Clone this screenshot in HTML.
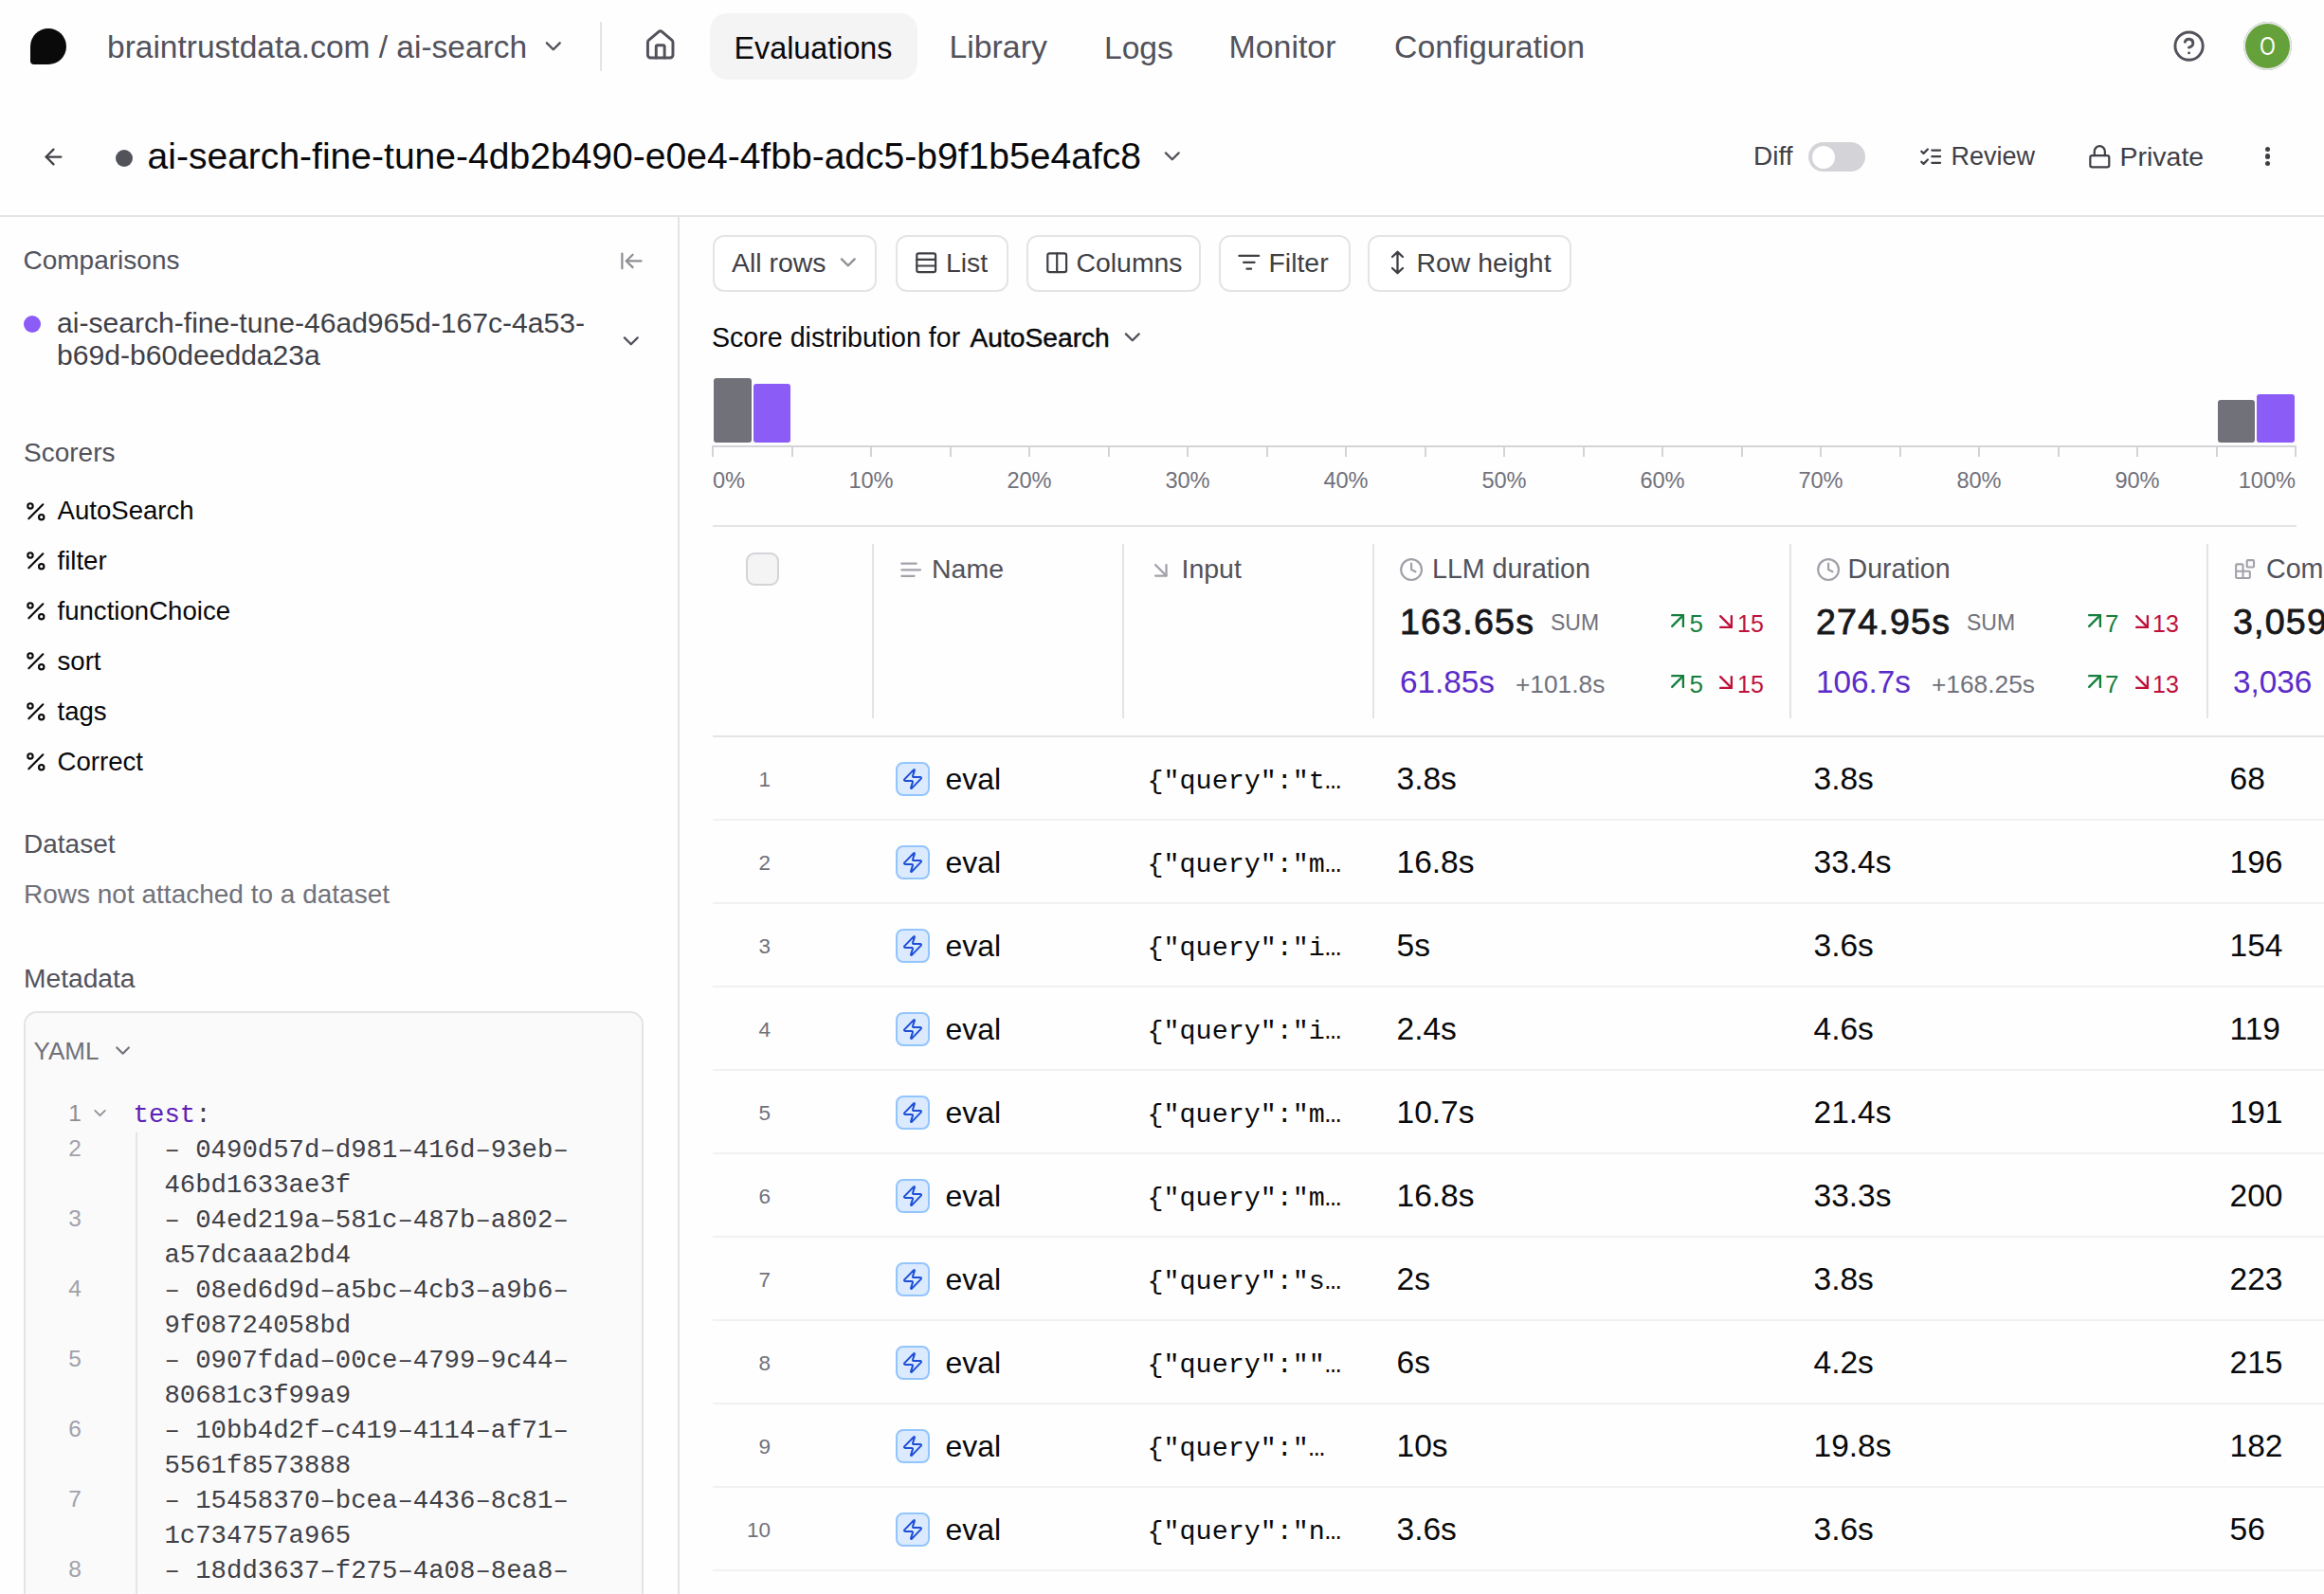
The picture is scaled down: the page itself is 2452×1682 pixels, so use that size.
<!DOCTYPE html>
<html><head><meta charset="utf-8"><title>ai-search eval</title><style>
html,body{margin:0;padding:0;}
body{width:2452px;height:1682px;position:relative;overflow:hidden;background:#fefefe;font-family:"Liberation Sans", sans-serif;}
.t{position:absolute;white-space:pre;}
.s{font-family:"Liberation Sans", sans-serif;}
.m{font-family:"Liberation Mono", monospace;}
.r{position:absolute;}
svg.r{overflow:visible;}
</style></head>
<body>
<div class="r" style="left:32px;top:30px;width:38px;height:38px;background:#0a0a0a;border-radius:19px 19px 19px 4px;"></div>
<div class="t s" style="left:113.0px;top:32.6px;font-size:33.5px;line-height:33.5px;color:#52525b;">braintrustdata.com / ai-search</div>
<svg class="r" style="left:570.30px;top:34.80px" width="27.60" height="27.60" viewBox="0 0 24 24" fill="none" stroke="#52525b" stroke-width="2.1" stroke-linecap="round" stroke-linejoin="round"><path d="m6 9 6 6 6-6"/></svg>
<div class="r" style="left:633px;top:23px;width:2px;height:52px;background:#e4e4e7;"></div>
<svg class="r" style="left:678.50px;top:29.80px" width="35.40" height="35.40" viewBox="0 0 24 24" fill="none" stroke="#52525b" stroke-width="2" stroke-linecap="round" stroke-linejoin="round"><path d="M15 21v-8a1 1 0 0 0-1-1h-4a1 1 0 0 0-1 1v8"/><path d="M3 10a2 2 0 0 1 .709-1.528l7-5.999a2 2 0 0 1 2.582 0l7 5.999A2 2 0 0 1 21 10v9a2 2 0 0 1-2 2H5a2 2 0 0 1-2-2z"/></svg>
<div class="r" style="left:749px;top:14px;width:219px;height:70px;background:#f4f4f5;border-radius:18px;"></div>
<div class="t s" style="left:774.5px;top:34.6px;font-size:32.3px;line-height:32.3px;color:#09090b;">Evaluations</div>
<div class="t s" style="left:1001.5px;top:33.4px;font-size:33.8px;line-height:33.8px;color:#52525b;">Library</div>
<div class="t s" style="left:1165.0px;top:33.5px;font-size:33.6px;line-height:33.6px;color:#52525b;">Logs</div>
<div class="t s" style="left:1296.5px;top:33.3px;font-size:33.9px;line-height:33.9px;color:#52525b;">Monitor</div>
<div class="t s" style="left:1471.0px;top:33.4px;font-size:33.8px;line-height:33.8px;color:#52525b;">Configuration</div>
<svg class="r" style="left:2292.00px;top:30.80px" width="35.14" height="35.14" viewBox="0 0 24 24" fill="none" stroke="#52525b" stroke-width="2" stroke-linecap="round" stroke-linejoin="round"><circle cx="12" cy="12" r="10"/><path d="M9.09 9a3 3 0 0 1 5.83 1c0 2-3 3-3 3"/><path d="M12 17h.01"/></svg>
<div class="r" style="left:2367px;top:23px;width:51px;height:51px;background:#65a13a;border-radius:50%;box-shadow:0 0 0 2px #e9e7ee inset;"></div>
<div class="t s" style="left:2376.0px;top:35.8px;font-size:27px;line-height:27px;color:#ffffff;width:33px;text-align:center;transform:scaleX(0.78);">O</div>
<svg class="r" style="left:42.50px;top:151.90px" width="27.00" height="27.00" viewBox="0 0 24 24" fill="none" stroke="#3f3f46" stroke-width="2" stroke-linecap="round" stroke-linejoin="round"><path d="m12 19-7-7 7-7"/><path d="M19 12H5"/></svg>
<div class="r" style="left:122px;top:158px;width:18px;height:18px;background:#52525b;border-radius:50%;"></div>
<div class="t s" style="left:155.5px;top:144.9px;font-size:39.05px;line-height:39.05px;color:#09090b;">ai-search-fine-tune-4db2b490-e0e4-4fbb-adc5-b9f1b5e4afc8</div>
<svg class="r" style="left:1223.00px;top:150.50px" width="27.60" height="27.60" viewBox="0 0 24 24" fill="none" stroke="#52525b" stroke-width="2" stroke-linecap="round" stroke-linejoin="round"><path d="m6 9 6 6 6-6"/></svg>
<div class="t s" style="left:1850.0px;top:151.3px;font-size:28px;line-height:28px;color:#3f3f46;">Diff</div>
<div class="r" style="left:1908px;top:150px;width:60px;height:31px;background:#d4d4d8;border-radius:16px;"></div>
<div class="r" style="left:1911.5px;top:153.5px;width:24.0px;height:24.0px;background:#ffffff;border-radius:50%;"></div>
<svg class="r" style="left:2023.80px;top:151.50px" width="26.40" height="26.40" viewBox="0 0 24 24" fill="none" stroke="#3f3f46" stroke-width="2" stroke-linecap="round" stroke-linejoin="round"><path d="m3 17 2 2 4-4"/><path d="m3 7 2 2 4-4"/><path d="M13 6h8"/><path d="M13 12h8"/><path d="M13 18h8"/></svg>
<div class="t s" style="left:2058.5px;top:152.1px;font-size:27px;line-height:27px;color:#3f3f46;">Review</div>
<svg class="r" style="left:2201.80px;top:151.70px" width="26.64" height="26.64" viewBox="0 0 24 24" fill="none" stroke="#3f3f46" stroke-width="2" stroke-linecap="round" stroke-linejoin="round"><rect width="18" height="11" x="3" y="11" rx="2" ry="2"/><path d="M7 11V7a5 5 0 0 1 10 0v4"/></svg>
<div class="t s" style="left:2236.5px;top:150.9px;font-size:28.5px;line-height:28.5px;color:#3f3f46;">Private</div>
<div class="r" style="left:2389.5px;top:154.8px;width:5.400000000000091px;height:5.399999999999977px;background:#3f3f46;border-radius:50%;"></div>
<div class="r" style="left:2389.5px;top:162.3px;width:5.400000000000091px;height:5.399999999999977px;background:#3f3f46;border-radius:50%;"></div>
<div class="r" style="left:2389.5px;top:169.8px;width:5.400000000000091px;height:5.399999999999977px;background:#3f3f46;border-radius:50%;"></div>
<div class="r" style="left:0px;top:227px;width:2452px;height:2px;background:#e4e4e7;"></div>
<div class="r" style="left:715px;top:229px;width:2px;height:1453px;background:#e4e4e7;"></div>
<div class="t s" style="left:24.5px;top:261.3px;font-size:28px;line-height:28px;color:#52525b;">Comparisons</div>
<svg class="r" style="left:652.80px;top:261.50px" width="26.88" height="26.88" viewBox="0 0 24 24" fill="none" stroke="#8e8e96" stroke-width="2" stroke-linecap="round" stroke-linejoin="round"><path d="M3 19V5"/><path d="m13 6-6 6 6 6"/><path d="M7 12h14"/></svg>
<div class="r" style="left:25px;top:333px;width:18px;height:18px;background:#8b5cf6;border-radius:50%;"></div>
<div class="t s" style="left:60.0px;top:325.5px;font-size:30.1px;line-height:30.1px;color:#3f3f46;">ai-search-fine-tune-46ad965d-167c-4a53-</div>
<div class="t s" style="left:60.0px;top:360.0px;font-size:30.1px;line-height:30.1px;color:#3f3f46;">b69d-b60deedda23a</div>
<svg class="r" style="left:652.30px;top:345.50px" width="27.60" height="27.60" viewBox="0 0 24 24" fill="none" stroke="#52525b" stroke-width="2" stroke-linecap="round" stroke-linejoin="round"><path d="m6 9 6 6 6-6"/></svg>
<div class="t s" style="left:25.0px;top:463.8px;font-size:28px;line-height:28px;color:#52525b;">Scorers</div>
<svg class="r" style="left:25.20px;top:526.60px" width="25.68" height="25.68" viewBox="0 0 24 24" fill="none" stroke="#09090b" stroke-width="2" stroke-linecap="round" stroke-linejoin="round"><line x1="19" x2="5" y1="5" y2="19"/><circle cx="6.5" cy="6.5" r="2.5"/><circle cx="17.5" cy="17.5" r="2.5"/></svg>
<div class="t s" style="left:60.5px;top:525.4px;font-size:27.6px;line-height:27.6px;color:#09090b;">AutoSearch</div>
<svg class="r" style="left:25.20px;top:579.45px" width="25.68" height="25.68" viewBox="0 0 24 24" fill="none" stroke="#09090b" stroke-width="2" stroke-linecap="round" stroke-linejoin="round"><line x1="19" x2="5" y1="5" y2="19"/><circle cx="6.5" cy="6.5" r="2.5"/><circle cx="17.5" cy="17.5" r="2.5"/></svg>
<div class="t s" style="left:60.5px;top:578.3px;font-size:27.6px;line-height:27.6px;color:#09090b;">filter</div>
<svg class="r" style="left:25.20px;top:632.30px" width="25.68" height="25.68" viewBox="0 0 24 24" fill="none" stroke="#09090b" stroke-width="2" stroke-linecap="round" stroke-linejoin="round"><line x1="19" x2="5" y1="5" y2="19"/><circle cx="6.5" cy="6.5" r="2.5"/><circle cx="17.5" cy="17.5" r="2.5"/></svg>
<div class="t s" style="left:60.5px;top:631.1px;font-size:27.6px;line-height:27.6px;color:#09090b;">functionChoice</div>
<svg class="r" style="left:25.20px;top:685.15px" width="25.68" height="25.68" viewBox="0 0 24 24" fill="none" stroke="#09090b" stroke-width="2" stroke-linecap="round" stroke-linejoin="round"><line x1="19" x2="5" y1="5" y2="19"/><circle cx="6.5" cy="6.5" r="2.5"/><circle cx="17.5" cy="17.5" r="2.5"/></svg>
<div class="t s" style="left:60.5px;top:684.0px;font-size:27.6px;line-height:27.6px;color:#09090b;">sort</div>
<svg class="r" style="left:25.20px;top:738.00px" width="25.68" height="25.68" viewBox="0 0 24 24" fill="none" stroke="#09090b" stroke-width="2" stroke-linecap="round" stroke-linejoin="round"><line x1="19" x2="5" y1="5" y2="19"/><circle cx="6.5" cy="6.5" r="2.5"/><circle cx="17.5" cy="17.5" r="2.5"/></svg>
<div class="t s" style="left:60.5px;top:736.8px;font-size:27.6px;line-height:27.6px;color:#09090b;">tags</div>
<svg class="r" style="left:25.20px;top:790.85px" width="25.68" height="25.68" viewBox="0 0 24 24" fill="none" stroke="#09090b" stroke-width="2" stroke-linecap="round" stroke-linejoin="round"><line x1="19" x2="5" y1="5" y2="19"/><circle cx="6.5" cy="6.5" r="2.5"/><circle cx="17.5" cy="17.5" r="2.5"/></svg>
<div class="t s" style="left:60.5px;top:789.7px;font-size:27.6px;line-height:27.6px;color:#09090b;">Correct</div>
<div class="t s" style="left:25.0px;top:877.3px;font-size:28px;line-height:28px;color:#52525b;">Dataset</div>
<div class="t s" style="left:25.0px;top:930.3px;font-size:28px;line-height:28px;color:#71717a;">Rows not attached to a dataset</div>
<div class="t s" style="left:25.0px;top:1018.1px;font-size:28.2px;line-height:28.2px;color:#52525b;">Metadata</div>
<div class="r" style="left:25px;top:1067px;width:654px;height:700px;background:#fafafa;border:2px solid #e4e4e7;border-radius:14px;box-sizing:border-box;"></div>
<div class="t s" style="left:35.5px;top:1096.0px;font-size:26px;line-height:26px;color:#71717a;">YAML</div>
<svg class="r" style="left:116.50px;top:1096.00px" width="25.20" height="25.20" viewBox="0 0 24 24" fill="none" stroke="#71717a" stroke-width="2" stroke-linecap="round" stroke-linejoin="round"><path d="m6 9 6 6 6-6"/></svg>
<div class="t s" style="left:60.0px;top:1163.3px;font-size:24.5px;line-height:24.5px;color:#8e8e96;width:26px;text-align:right;">1</div>
<svg class="r" style="left:94.50px;top:1163.50px" width="21.12" height="21.12" viewBox="0 0 24 24" fill="none" stroke="#8e8e96" stroke-width="2" stroke-linecap="round" stroke-linejoin="round"><path d="m6 9 6 6 6-6"/></svg>
<div class="t m" style="left:140.6px;top:1163.1px;font-size:27.33px;line-height:27.33px;color:#5b21b6;">test</div>
<div class="t m" style="left:206.2px;top:1163.1px;font-size:27.33px;line-height:27.33px;color:#3f3f46;">:</div>
<div class="t s" style="left:60.0px;top:1200.3px;font-size:24.5px;line-height:24.5px;color:#a1a1aa;width:26px;text-align:right;">2</div>
<div class="t m" style="left:173.4px;top:1200.1px;font-size:27.33px;line-height:27.33px;color:#3f3f46;">– 0490d57d–d981–416d–93eb–</div>
<div class="t m" style="left:173.4px;top:1237.1px;font-size:27.33px;line-height:27.33px;color:#3f3f46;">46bd1633ae3f</div>
<div class="t s" style="left:60.0px;top:1274.3px;font-size:24.5px;line-height:24.5px;color:#a1a1aa;width:26px;text-align:right;">3</div>
<div class="t m" style="left:173.4px;top:1274.1px;font-size:27.33px;line-height:27.33px;color:#3f3f46;">– 04ed219a–581c–487b–a802–</div>
<div class="t m" style="left:173.4px;top:1311.1px;font-size:27.33px;line-height:27.33px;color:#3f3f46;">a57dcaaa2bd4</div>
<div class="t s" style="left:60.0px;top:1348.3px;font-size:24.5px;line-height:24.5px;color:#a1a1aa;width:26px;text-align:right;">4</div>
<div class="t m" style="left:173.4px;top:1348.1px;font-size:27.33px;line-height:27.33px;color:#3f3f46;">– 08ed6d9d–a5bc–4cb3–a9b6–</div>
<div class="t m" style="left:173.4px;top:1385.1px;font-size:27.33px;line-height:27.33px;color:#3f3f46;">9f08724058bd</div>
<div class="t s" style="left:60.0px;top:1422.3px;font-size:24.5px;line-height:24.5px;color:#a1a1aa;width:26px;text-align:right;">5</div>
<div class="t m" style="left:173.4px;top:1422.1px;font-size:27.33px;line-height:27.33px;color:#3f3f46;">– 0907fdad–00ce–4799–9c44–</div>
<div class="t m" style="left:173.4px;top:1459.1px;font-size:27.33px;line-height:27.33px;color:#3f3f46;">80681c3f99a9</div>
<div class="t s" style="left:60.0px;top:1496.3px;font-size:24.5px;line-height:24.5px;color:#a1a1aa;width:26px;text-align:right;">6</div>
<div class="t m" style="left:173.4px;top:1496.1px;font-size:27.33px;line-height:27.33px;color:#3f3f46;">– 10bb4d2f–c419–4114–af71–</div>
<div class="t m" style="left:173.4px;top:1533.1px;font-size:27.33px;line-height:27.33px;color:#3f3f46;">5561f8573888</div>
<div class="t s" style="left:60.0px;top:1570.3px;font-size:24.5px;line-height:24.5px;color:#a1a1aa;width:26px;text-align:right;">7</div>
<div class="t m" style="left:173.4px;top:1570.1px;font-size:27.33px;line-height:27.33px;color:#3f3f46;">– 15458370–bcea–4436–8c81–</div>
<div class="t m" style="left:173.4px;top:1607.1px;font-size:27.33px;line-height:27.33px;color:#3f3f46;">1c734757a965</div>
<div class="t s" style="left:60.0px;top:1644.3px;font-size:24.5px;line-height:24.5px;color:#a1a1aa;width:26px;text-align:right;">8</div>
<div class="t m" style="left:173.4px;top:1644.1px;font-size:27.33px;line-height:27.33px;color:#3f3f46;">– 18dd3637–f275–4a08–8ea8–</div>
<div class="t m" style="left:173.4px;top:1681.1px;font-size:27.33px;line-height:27.33px;color:#3f3f46;"></div>
<div class="r" style="left:142.5px;top:1195px;width:2.0px;height:487px;background:#e4e4e7;"></div>
<div class="r" style="left:752px;top:247.5px;width:173px;height:60px;border:2px solid #e4e4e7;border-radius:12px;box-sizing:border-box;background:#fff;"></div>
<div class="r" style="left:944.5px;top:247.5px;width:119.0px;height:60px;border:2px solid #e4e4e7;border-radius:12px;box-sizing:border-box;background:#fff;"></div>
<div class="r" style="left:1082.5px;top:247.5px;width:184.5px;height:60px;border:2px solid #e4e4e7;border-radius:12px;box-sizing:border-box;background:#fff;"></div>
<div class="r" style="left:1285.5px;top:247.5px;width:139.0px;height:60px;border:2px solid #e4e4e7;border-radius:12px;box-sizing:border-box;background:#fff;"></div>
<div class="r" style="left:1442.5px;top:247.5px;width:215.0px;height:60px;border:2px solid #e4e4e7;border-radius:12px;box-sizing:border-box;background:#fff;"></div>
<div class="t s" style="left:772.0px;top:263.0px;font-size:28.4px;line-height:28.4px;color:#3f3f46;">All rows</div>
<svg class="r" style="left:880.50px;top:262.80px" width="27.60" height="27.60" viewBox="0 0 24 24" fill="none" stroke="#8e8e96" stroke-width="2" stroke-linecap="round" stroke-linejoin="round"><path d="m6 9 6 6 6-6"/></svg>
<svg class="r" style="left:963.80px;top:263.80px" width="26.40" height="26.40" viewBox="0 0 24 24" fill="none" stroke="#3f3f46" stroke-width="2" stroke-linecap="round" stroke-linejoin="round"><rect width="18" height="18" x="3" y="3" rx="2"/><path d="M21 9H3"/><path d="M21 15H3"/></svg>
<div class="t s" style="left:998.0px;top:263.0px;font-size:28.4px;line-height:28.4px;color:#3f3f46;">List</div>
<svg class="r" style="left:1101.60px;top:263.60px" width="26.40" height="26.40" viewBox="0 0 24 24" fill="none" stroke="#3f3f46" stroke-width="2" stroke-linecap="round" stroke-linejoin="round"><rect width="18" height="18" x="3" y="3" rx="2"/><path d="M12 3v18"/></svg>
<div class="t s" style="left:1135.5px;top:263.0px;font-size:28.4px;line-height:28.4px;color:#3f3f46;">Columns</div>
<svg class="r" style="left:1303.70px;top:263.00px" width="27.60" height="27.60" viewBox="0 0 24 24" fill="none" stroke="#3f3f46" stroke-width="2" stroke-linecap="round" stroke-linejoin="round"><path d="M3 6h18"/><path d="M7 12h10"/><path d="M10 18h4"/></svg>
<div class="t s" style="left:1338.5px;top:263.0px;font-size:28.4px;line-height:28.4px;color:#3f3f46;">Filter</div>
<svg class="r" style="left:1466px;top:264px;" width="17" height="26" viewBox="0 0 17 26" fill="none"><path d="M8.5 2 V24 M3 7 L8.5 1.8 L14 7 M3 19 L8.5 24.2 L14 19" stroke="#3f3f46" stroke-width="2.3" stroke-linecap="round" stroke-linejoin="round"/></svg>
<div class="t s" style="left:1494.5px;top:263.0px;font-size:28.4px;line-height:28.4px;color:#3f3f46;">Row height</div>
<div class="t s" style="left:751.0px;top:341.8px;font-size:28.6px;line-height:28.6px;color:#09090b;">Score distribution for</div>
<div class="t s" style="left:1023.5px;top:342.1px;font-size:28.2px;line-height:28.2px;color:#09090b;-webkit-text-stroke:0.45px #09090b;">AutoSearch</div>
<svg class="r" style="left:1180.50px;top:342.00px" width="27.60" height="27.60" viewBox="0 0 24 24" fill="none" stroke="#52525b" stroke-width="2" stroke-linecap="round" stroke-linejoin="round"><path d="m6 9 6 6 6-6"/></svg>
<div class="r" style="left:753px;top:399px;width:39.5px;height:68px;background:#71717a;border-radius:3px;"></div>
<div class="r" style="left:795px;top:405px;width:39px;height:62px;background:#8b5cf6;border-radius:3px;"></div>
<div class="r" style="left:2339.5px;top:422px;width:39.0px;height:45px;background:#71717a;border-radius:3px;"></div>
<div class="r" style="left:2381px;top:416px;width:39.5px;height:51px;background:#8b5cf6;border-radius:3px;"></div>
<div class="r" style="left:751px;top:469.5px;width:1672px;height:2.5px;background:#d4d4d8;"></div>
<div class="r" style="left:751.0px;top:470px;width:2px;height:12px;background:#d4d4d8;"></div>
<div class="r" style="left:834.5px;top:470px;width:2px;height:12px;background:#d4d4d8;"></div>
<div class="r" style="left:918.0px;top:470px;width:2px;height:12px;background:#d4d4d8;"></div>
<div class="r" style="left:1001.5px;top:470px;width:2px;height:12px;background:#d4d4d8;"></div>
<div class="r" style="left:1085.0px;top:470px;width:2px;height:12px;background:#d4d4d8;"></div>
<div class="r" style="left:1168.5px;top:470px;width:2px;height:12px;background:#d4d4d8;"></div>
<div class="r" style="left:1252.0px;top:470px;width:2px;height:12px;background:#d4d4d8;"></div>
<div class="r" style="left:1335.5px;top:470px;width:2px;height:12px;background:#d4d4d8;"></div>
<div class="r" style="left:1419.0px;top:470px;width:2px;height:12px;background:#d4d4d8;"></div>
<div class="r" style="left:1502.5px;top:470px;width:2px;height:12px;background:#d4d4d8;"></div>
<div class="r" style="left:1586.0px;top:470px;width:2px;height:12px;background:#d4d4d8;"></div>
<div class="r" style="left:1669.5px;top:470px;width:2px;height:12px;background:#d4d4d8;"></div>
<div class="r" style="left:1753.0px;top:470px;width:2px;height:12px;background:#d4d4d8;"></div>
<div class="r" style="left:1836.5px;top:470px;width:2px;height:12px;background:#d4d4d8;"></div>
<div class="r" style="left:1920.0px;top:470px;width:2px;height:12px;background:#d4d4d8;"></div>
<div class="r" style="left:2003.5px;top:470px;width:2px;height:12px;background:#d4d4d8;"></div>
<div class="r" style="left:2087.0px;top:470px;width:2px;height:12px;background:#d4d4d8;"></div>
<div class="r" style="left:2170.5px;top:470px;width:2px;height:12px;background:#d4d4d8;"></div>
<div class="r" style="left:2254.0px;top:470px;width:2px;height:12px;background:#d4d4d8;"></div>
<div class="r" style="left:2337.5px;top:470px;width:2px;height:12px;background:#d4d4d8;"></div>
<div class="r" style="left:2421.0px;top:470px;width:2px;height:12px;background:#d4d4d8;"></div>
<div class="t s" style="left:752.0px;top:496.0px;font-size:23.6px;line-height:23.6px;color:#71717a;">0%</div>
<div class="t s" style="left:839.0px;top:496.0px;font-size:23.6px;line-height:23.6px;color:#71717a;width:160px;text-align:center;">10%</div>
<div class="t s" style="left:1006.0px;top:496.0px;font-size:23.6px;line-height:23.6px;color:#71717a;width:160px;text-align:center;">20%</div>
<div class="t s" style="left:1173.0px;top:496.0px;font-size:23.6px;line-height:23.6px;color:#71717a;width:160px;text-align:center;">30%</div>
<div class="t s" style="left:1340.0px;top:496.0px;font-size:23.6px;line-height:23.6px;color:#71717a;width:160px;text-align:center;">40%</div>
<div class="t s" style="left:1507.0px;top:496.0px;font-size:23.6px;line-height:23.6px;color:#71717a;width:160px;text-align:center;">50%</div>
<div class="t s" style="left:1674.0px;top:496.0px;font-size:23.6px;line-height:23.6px;color:#71717a;width:160px;text-align:center;">60%</div>
<div class="t s" style="left:1841.0px;top:496.0px;font-size:23.6px;line-height:23.6px;color:#71717a;width:160px;text-align:center;">70%</div>
<div class="t s" style="left:2008.0px;top:496.0px;font-size:23.6px;line-height:23.6px;color:#71717a;width:160px;text-align:center;">80%</div>
<div class="t s" style="left:2175.0px;top:496.0px;font-size:23.6px;line-height:23.6px;color:#71717a;width:160px;text-align:center;">90%</div>
<div class="t s" style="left:2262.0px;top:496.0px;font-size:23.6px;line-height:23.6px;color:#71717a;width:160px;text-align:right;">100%</div>
<div class="r" style="left:752px;top:554px;width:1671px;height:2px;background:#e4e4e7;"></div>
<div class="r" style="left:787px;top:583px;width:35px;height:35px;background:#f4f4f5;border:2px solid #d4d4d8;border-radius:9px;box-sizing:border-box;"></div>
<div class="r" style="left:920px;top:574px;width:2px;height:184px;background:#e4e4e7;"></div>
<div class="r" style="left:1184px;top:574px;width:2px;height:184px;background:#e4e4e7;"></div>
<div class="r" style="left:1448px;top:574px;width:2px;height:184px;background:#e4e4e7;"></div>
<div class="r" style="left:1888px;top:574px;width:2px;height:184px;background:#e4e4e7;"></div>
<div class="r" style="left:2328px;top:574px;width:2px;height:184px;background:#e4e4e7;"></div>
<svg class="r" style="left:947.80px;top:588.40px" width="26.40" height="26.40" viewBox="0 0 24 24" fill="none" stroke="#a1a1aa" stroke-width="2" stroke-linecap="round" stroke-linejoin="round"><path d="M17 6.1H3"/><path d="M21 12.1H3"/><path d="M15.1 18H3"/></svg>
<div class="t s" style="left:983.0px;top:585.9px;font-size:28.5px;line-height:28.5px;color:#52525b;">Name</div>
<svg class="r" style="left:1210.70px;top:587.70px" width="27.60" height="27.60" viewBox="0 0 24 24" fill="none" stroke="#a1a1aa" stroke-width="2" stroke-linecap="round" stroke-linejoin="round"><path d="m7 7 10 10"/><path d="M17 7v10H7"/></svg>
<div class="t s" style="left:1246.5px;top:585.9px;font-size:28.5px;line-height:28.5px;color:#52525b;">Input</div>
<svg class="r" style="left:1475.90px;top:587.90px" width="26.16" height="26.16" viewBox="0 0 24 24" fill="none" stroke="#a1a1aa" stroke-width="2" stroke-linecap="round" stroke-linejoin="round"><circle cx="12" cy="12" r="10"/><polyline points="12 6 12 12 16 14"/></svg>
<div class="t s" style="left:1511.0px;top:585.8px;font-size:28.6px;line-height:28.6px;color:#52525b;">LLM duration</div>
<svg class="r" style="left:1915.90px;top:587.90px" width="26.16" height="26.16" viewBox="0 0 24 24" fill="none" stroke="#a1a1aa" stroke-width="2" stroke-linecap="round" stroke-linejoin="round"><circle cx="12" cy="12" r="10"/><polyline points="12 6 12 12 16 14"/></svg>
<div class="t s" style="left:1949.5px;top:585.8px;font-size:28.6px;line-height:28.6px;color:#52525b;">Duration</div>
<svg class="r" style="left:2356.4px;top:588.3px;" width="25.2" height="25.2" viewBox="0 0 25.2 25.2" fill="none"><g transform="scale(1.05)" stroke="#a1a1aa" stroke-width="2" stroke-linecap="round" stroke-linejoin="round"><rect width="7" height="7" x="14" y="3" rx="1"/><path d="M10 21V8a1 1 0 0 0-1-1H4a1 1 0 0 0-1 1v12a1 1 0 0 0 1 1h12a1 1 0 0 0 1-1v-5a1 1 0 0 0-1-1H3"/></g></svg>
<div class="t s" style="left:2391.0px;top:585.8px;font-size:28.6px;line-height:28.6px;color:#52525b;">Com</div>
<div class="t s" style="left:1477.0px;top:638.2px;font-size:37.6px;line-height:37.6px;color:#18181b;-webkit-text-stroke:0.8px #18181b;letter-spacing:1.2px;">163.65s</div>
<div class="t s" style="left:1636.0px;top:645.5px;font-size:23px;line-height:23px;color:#71717a;">SUM</div>
<div class="t s" style="left:1477.0px;top:703.3px;font-size:33.3px;line-height:33.3px;color:#5b2bc9;">61.85s</div>
<div class="t s" style="left:1599.0px;top:708.7px;font-size:26.3px;line-height:26.3px;color:#71717a;">+101.8s</div>
<svg class="r" style="left:1756.00px;top:641.20px" width="28.08" height="28.08" viewBox="0 0 24 24" fill="none" stroke="#15803d" stroke-width="2" stroke-linecap="round" stroke-linejoin="round"><path d="M7 7h10v10"/><path d="M7 17 17 7"/></svg>
<div class="t s" style="left:1782.5px;top:645.0px;font-size:26px;line-height:26px;color:#15803d;">5</div>
<svg class="r" style="left:1806.50px;top:642.00px" width="28.08" height="28.08" viewBox="0 0 24 24" fill="none" stroke="#be123c" stroke-width="2" stroke-linecap="round" stroke-linejoin="round"><path d="m7 7 10 10"/><path d="M17 7v10H7"/></svg>
<div class="t s" style="left:1833.0px;top:645.8px;font-size:25px;line-height:25px;color:#be123c;">15</div>
<svg class="r" style="left:1756.00px;top:705.20px" width="28.08" height="28.08" viewBox="0 0 24 24" fill="none" stroke="#15803d" stroke-width="2" stroke-linecap="round" stroke-linejoin="round"><path d="M7 7h10v10"/><path d="M7 17 17 7"/></svg>
<div class="t s" style="left:1782.5px;top:709.0px;font-size:26px;line-height:26px;color:#15803d;">5</div>
<svg class="r" style="left:1806.50px;top:706.00px" width="28.08" height="28.08" viewBox="0 0 24 24" fill="none" stroke="#be123c" stroke-width="2" stroke-linecap="round" stroke-linejoin="round"><path d="m7 7 10 10"/><path d="M17 7v10H7"/></svg>
<div class="t s" style="left:1833.0px;top:709.8px;font-size:25px;line-height:25px;color:#be123c;">15</div>
<div class="t s" style="left:1916.0px;top:638.2px;font-size:37.6px;line-height:37.6px;color:#18181b;-webkit-text-stroke:0.8px #18181b;letter-spacing:1.2px;">274.95s</div>
<div class="t s" style="left:2075.0px;top:645.5px;font-size:23px;line-height:23px;color:#71717a;">SUM</div>
<div class="t s" style="left:1916.0px;top:703.3px;font-size:33.3px;line-height:33.3px;color:#5b2bc9;">106.7s</div>
<div class="t s" style="left:2038.0px;top:708.7px;font-size:26.3px;line-height:26.3px;color:#71717a;">+168.25s</div>
<svg class="r" style="left:2196.00px;top:641.20px" width="28.08" height="28.08" viewBox="0 0 24 24" fill="none" stroke="#15803d" stroke-width="2" stroke-linecap="round" stroke-linejoin="round"><path d="M7 7h10v10"/><path d="M7 17 17 7"/></svg>
<div class="t s" style="left:2221.0px;top:645.0px;font-size:26px;line-height:26px;color:#15803d;">7</div>
<svg class="r" style="left:2245.50px;top:642.00px" width="28.08" height="28.08" viewBox="0 0 24 24" fill="none" stroke="#be123c" stroke-width="2" stroke-linecap="round" stroke-linejoin="round"><path d="m7 7 10 10"/><path d="M17 7v10H7"/></svg>
<div class="t s" style="left:2271.0px;top:645.8px;font-size:25px;line-height:25px;color:#be123c;">13</div>
<svg class="r" style="left:2196.00px;top:705.20px" width="28.08" height="28.08" viewBox="0 0 24 24" fill="none" stroke="#15803d" stroke-width="2" stroke-linecap="round" stroke-linejoin="round"><path d="M7 7h10v10"/><path d="M7 17 17 7"/></svg>
<div class="t s" style="left:2221.0px;top:709.0px;font-size:26px;line-height:26px;color:#15803d;">7</div>
<svg class="r" style="left:2245.50px;top:706.00px" width="28.08" height="28.08" viewBox="0 0 24 24" fill="none" stroke="#be123c" stroke-width="2" stroke-linecap="round" stroke-linejoin="round"><path d="m7 7 10 10"/><path d="M17 7v10H7"/></svg>
<div class="t s" style="left:2271.0px;top:709.8px;font-size:25px;line-height:25px;color:#be123c;">13</div>
<div class="t s" style="left:2356.0px;top:638.2px;font-size:37.6px;line-height:37.6px;color:#18181b;-webkit-text-stroke:0.8px #18181b;letter-spacing:1.2px;">3,059</div>
<div class="t s" style="left:2356.0px;top:703.3px;font-size:33.3px;line-height:33.3px;color:#5b2bc9;">3,036</div>
<div class="r" style="left:752px;top:776px;width:1700px;height:2px;background:#e4e4e7;"></div>
<div class="t s" style="left:760.0px;top:811.9px;font-size:22.5px;line-height:22.5px;color:#71717a;width:53px;text-align:right;">1</div>
<div class="r" style="left:945px;top:804px;width:36px;height:36px;background:#dbeafe;border:2px solid #93c5fd;border-radius:8px;box-sizing:border-box;"></div>
<svg class="r" style="left:945px;top:804px;" width="36" height="36" viewBox="0 0 36 36" fill="none"><g transform="translate(6 6)"><path d="M4 14a1 1 0 0 1-.78-1.63l9.9-10.2a.5.5 0 0 1 .86.46l-1.920 6.02A1 1 0 0 0 13 10h7a1 1 0 0 1 .78 1.63l-9.9 10.2a.5.5 0 0 1-.86-.46l1.92-6.02A1 1 0 0 0 11 14z" stroke="#1d4ed8" stroke-width="2" stroke-linecap="round" stroke-linejoin="round"/></g></svg>
<div class="t s" style="left:997.5px;top:805.9px;font-size:32px;line-height:32px;color:#09090b;">eval</div>
<div class="t m" style="left:1210.5px;top:811.2px;font-size:28.4px;line-height:28.4px;color:#09090b;">{&quot;query&quot;:&quot;t…</div>
<div class="t s" style="left:1473.5px;top:804.6px;font-size:33.5px;line-height:33.5px;color:#09090b;">3.8s</div>
<div class="t s" style="left:1913.5px;top:804.6px;font-size:33.5px;line-height:33.5px;color:#09090b;">3.8s</div>
<div class="t s" style="left:2352.5px;top:804.6px;font-size:33.5px;line-height:33.5px;color:#09090b;">68</div>
<div class="r" style="left:752px;top:864px;width:1700px;height:2px;background:#f1f1f3;"></div>
<div class="t s" style="left:760.0px;top:899.9px;font-size:22.5px;line-height:22.5px;color:#71717a;width:53px;text-align:right;">2</div>
<div class="r" style="left:945px;top:892px;width:36px;height:36px;background:#dbeafe;border:2px solid #93c5fd;border-radius:8px;box-sizing:border-box;"></div>
<svg class="r" style="left:945px;top:892px;" width="36" height="36" viewBox="0 0 36 36" fill="none"><g transform="translate(6 6)"><path d="M4 14a1 1 0 0 1-.78-1.63l9.9-10.2a.5.5 0 0 1 .86.46l-1.920 6.02A1 1 0 0 0 13 10h7a1 1 0 0 1 .78 1.63l-9.9 10.2a.5.5 0 0 1-.86-.46l1.92-6.02A1 1 0 0 0 11 14z" stroke="#1d4ed8" stroke-width="2" stroke-linecap="round" stroke-linejoin="round"/></g></svg>
<div class="t s" style="left:997.5px;top:893.9px;font-size:32px;line-height:32px;color:#09090b;">eval</div>
<div class="t m" style="left:1210.5px;top:899.2px;font-size:28.4px;line-height:28.4px;color:#09090b;">{&quot;query&quot;:&quot;m…</div>
<div class="t s" style="left:1473.5px;top:892.6px;font-size:33.5px;line-height:33.5px;color:#09090b;">16.8s</div>
<div class="t s" style="left:1913.5px;top:892.6px;font-size:33.5px;line-height:33.5px;color:#09090b;">33.4s</div>
<div class="t s" style="left:2352.5px;top:892.6px;font-size:33.5px;line-height:33.5px;color:#09090b;">196</div>
<div class="r" style="left:752px;top:952px;width:1700px;height:2px;background:#f1f1f3;"></div>
<div class="t s" style="left:760.0px;top:987.9px;font-size:22.5px;line-height:22.5px;color:#71717a;width:53px;text-align:right;">3</div>
<div class="r" style="left:945px;top:980px;width:36px;height:36px;background:#dbeafe;border:2px solid #93c5fd;border-radius:8px;box-sizing:border-box;"></div>
<svg class="r" style="left:945px;top:980px;" width="36" height="36" viewBox="0 0 36 36" fill="none"><g transform="translate(6 6)"><path d="M4 14a1 1 0 0 1-.78-1.63l9.9-10.2a.5.5 0 0 1 .86.46l-1.920 6.02A1 1 0 0 0 13 10h7a1 1 0 0 1 .78 1.63l-9.9 10.2a.5.5 0 0 1-.86-.46l1.92-6.02A1 1 0 0 0 11 14z" stroke="#1d4ed8" stroke-width="2" stroke-linecap="round" stroke-linejoin="round"/></g></svg>
<div class="t s" style="left:997.5px;top:981.9px;font-size:32px;line-height:32px;color:#09090b;">eval</div>
<div class="t m" style="left:1210.5px;top:987.2px;font-size:28.4px;line-height:28.4px;color:#09090b;">{&quot;query&quot;:&quot;i…</div>
<div class="t s" style="left:1473.5px;top:980.6px;font-size:33.5px;line-height:33.5px;color:#09090b;">5s</div>
<div class="t s" style="left:1913.5px;top:980.6px;font-size:33.5px;line-height:33.5px;color:#09090b;">3.6s</div>
<div class="t s" style="left:2352.5px;top:980.6px;font-size:33.5px;line-height:33.5px;color:#09090b;">154</div>
<div class="r" style="left:752px;top:1040px;width:1700px;height:2px;background:#f1f1f3;"></div>
<div class="t s" style="left:760.0px;top:1075.9px;font-size:22.5px;line-height:22.5px;color:#71717a;width:53px;text-align:right;">4</div>
<div class="r" style="left:945px;top:1068px;width:36px;height:36px;background:#dbeafe;border:2px solid #93c5fd;border-radius:8px;box-sizing:border-box;"></div>
<svg class="r" style="left:945px;top:1068px;" width="36" height="36" viewBox="0 0 36 36" fill="none"><g transform="translate(6 6)"><path d="M4 14a1 1 0 0 1-.78-1.63l9.9-10.2a.5.5 0 0 1 .86.46l-1.920 6.02A1 1 0 0 0 13 10h7a1 1 0 0 1 .78 1.63l-9.9 10.2a.5.5 0 0 1-.86-.46l1.92-6.02A1 1 0 0 0 11 14z" stroke="#1d4ed8" stroke-width="2" stroke-linecap="round" stroke-linejoin="round"/></g></svg>
<div class="t s" style="left:997.5px;top:1069.9px;font-size:32px;line-height:32px;color:#09090b;">eval</div>
<div class="t m" style="left:1210.5px;top:1075.2px;font-size:28.4px;line-height:28.4px;color:#09090b;">{&quot;query&quot;:&quot;i…</div>
<div class="t s" style="left:1473.5px;top:1068.6px;font-size:33.5px;line-height:33.5px;color:#09090b;">2.4s</div>
<div class="t s" style="left:1913.5px;top:1068.6px;font-size:33.5px;line-height:33.5px;color:#09090b;">4.6s</div>
<div class="t s" style="left:2352.5px;top:1068.6px;font-size:33.5px;line-height:33.5px;color:#09090b;">119</div>
<div class="r" style="left:752px;top:1128px;width:1700px;height:2px;background:#f1f1f3;"></div>
<div class="t s" style="left:760.0px;top:1163.9px;font-size:22.5px;line-height:22.5px;color:#71717a;width:53px;text-align:right;">5</div>
<div class="r" style="left:945px;top:1156px;width:36px;height:36px;background:#dbeafe;border:2px solid #93c5fd;border-radius:8px;box-sizing:border-box;"></div>
<svg class="r" style="left:945px;top:1156px;" width="36" height="36" viewBox="0 0 36 36" fill="none"><g transform="translate(6 6)"><path d="M4 14a1 1 0 0 1-.78-1.63l9.9-10.2a.5.5 0 0 1 .86.46l-1.920 6.02A1 1 0 0 0 13 10h7a1 1 0 0 1 .78 1.63l-9.9 10.2a.5.5 0 0 1-.86-.46l1.92-6.02A1 1 0 0 0 11 14z" stroke="#1d4ed8" stroke-width="2" stroke-linecap="round" stroke-linejoin="round"/></g></svg>
<div class="t s" style="left:997.5px;top:1157.9px;font-size:32px;line-height:32px;color:#09090b;">eval</div>
<div class="t m" style="left:1210.5px;top:1163.2px;font-size:28.4px;line-height:28.4px;color:#09090b;">{&quot;query&quot;:&quot;m…</div>
<div class="t s" style="left:1473.5px;top:1156.6px;font-size:33.5px;line-height:33.5px;color:#09090b;">10.7s</div>
<div class="t s" style="left:1913.5px;top:1156.6px;font-size:33.5px;line-height:33.5px;color:#09090b;">21.4s</div>
<div class="t s" style="left:2352.5px;top:1156.6px;font-size:33.5px;line-height:33.5px;color:#09090b;">191</div>
<div class="r" style="left:752px;top:1216px;width:1700px;height:2px;background:#f1f1f3;"></div>
<div class="t s" style="left:760.0px;top:1251.9px;font-size:22.5px;line-height:22.5px;color:#71717a;width:53px;text-align:right;">6</div>
<div class="r" style="left:945px;top:1244px;width:36px;height:36px;background:#dbeafe;border:2px solid #93c5fd;border-radius:8px;box-sizing:border-box;"></div>
<svg class="r" style="left:945px;top:1244px;" width="36" height="36" viewBox="0 0 36 36" fill="none"><g transform="translate(6 6)"><path d="M4 14a1 1 0 0 1-.78-1.63l9.9-10.2a.5.5 0 0 1 .86.46l-1.920 6.02A1 1 0 0 0 13 10h7a1 1 0 0 1 .78 1.63l-9.9 10.2a.5.5 0 0 1-.86-.46l1.92-6.02A1 1 0 0 0 11 14z" stroke="#1d4ed8" stroke-width="2" stroke-linecap="round" stroke-linejoin="round"/></g></svg>
<div class="t s" style="left:997.5px;top:1245.9px;font-size:32px;line-height:32px;color:#09090b;">eval</div>
<div class="t m" style="left:1210.5px;top:1251.2px;font-size:28.4px;line-height:28.4px;color:#09090b;">{&quot;query&quot;:&quot;m…</div>
<div class="t s" style="left:1473.5px;top:1244.6px;font-size:33.5px;line-height:33.5px;color:#09090b;">16.8s</div>
<div class="t s" style="left:1913.5px;top:1244.6px;font-size:33.5px;line-height:33.5px;color:#09090b;">33.3s</div>
<div class="t s" style="left:2352.5px;top:1244.6px;font-size:33.5px;line-height:33.5px;color:#09090b;">200</div>
<div class="r" style="left:752px;top:1304px;width:1700px;height:2px;background:#f1f1f3;"></div>
<div class="t s" style="left:760.0px;top:1339.9px;font-size:22.5px;line-height:22.5px;color:#71717a;width:53px;text-align:right;">7</div>
<div class="r" style="left:945px;top:1332px;width:36px;height:36px;background:#dbeafe;border:2px solid #93c5fd;border-radius:8px;box-sizing:border-box;"></div>
<svg class="r" style="left:945px;top:1332px;" width="36" height="36" viewBox="0 0 36 36" fill="none"><g transform="translate(6 6)"><path d="M4 14a1 1 0 0 1-.78-1.63l9.9-10.2a.5.5 0 0 1 .86.46l-1.920 6.02A1 1 0 0 0 13 10h7a1 1 0 0 1 .78 1.63l-9.9 10.2a.5.5 0 0 1-.86-.46l1.92-6.02A1 1 0 0 0 11 14z" stroke="#1d4ed8" stroke-width="2" stroke-linecap="round" stroke-linejoin="round"/></g></svg>
<div class="t s" style="left:997.5px;top:1333.9px;font-size:32px;line-height:32px;color:#09090b;">eval</div>
<div class="t m" style="left:1210.5px;top:1339.2px;font-size:28.4px;line-height:28.4px;color:#09090b;">{&quot;query&quot;:&quot;s…</div>
<div class="t s" style="left:1473.5px;top:1332.6px;font-size:33.5px;line-height:33.5px;color:#09090b;">2s</div>
<div class="t s" style="left:1913.5px;top:1332.6px;font-size:33.5px;line-height:33.5px;color:#09090b;">3.8s</div>
<div class="t s" style="left:2352.5px;top:1332.6px;font-size:33.5px;line-height:33.5px;color:#09090b;">223</div>
<div class="r" style="left:752px;top:1392px;width:1700px;height:2px;background:#f1f1f3;"></div>
<div class="t s" style="left:760.0px;top:1427.9px;font-size:22.5px;line-height:22.5px;color:#71717a;width:53px;text-align:right;">8</div>
<div class="r" style="left:945px;top:1420px;width:36px;height:36px;background:#dbeafe;border:2px solid #93c5fd;border-radius:8px;box-sizing:border-box;"></div>
<svg class="r" style="left:945px;top:1420px;" width="36" height="36" viewBox="0 0 36 36" fill="none"><g transform="translate(6 6)"><path d="M4 14a1 1 0 0 1-.78-1.63l9.9-10.2a.5.5 0 0 1 .86.46l-1.920 6.02A1 1 0 0 0 13 10h7a1 1 0 0 1 .78 1.63l-9.9 10.2a.5.5 0 0 1-.86-.46l1.92-6.02A1 1 0 0 0 11 14z" stroke="#1d4ed8" stroke-width="2" stroke-linecap="round" stroke-linejoin="round"/></g></svg>
<div class="t s" style="left:997.5px;top:1421.9px;font-size:32px;line-height:32px;color:#09090b;">eval</div>
<div class="t m" style="left:1210.5px;top:1427.2px;font-size:28.4px;line-height:28.4px;color:#09090b;">{&quot;query&quot;:&quot;&quot;…</div>
<div class="t s" style="left:1473.5px;top:1420.6px;font-size:33.5px;line-height:33.5px;color:#09090b;">6s</div>
<div class="t s" style="left:1913.5px;top:1420.6px;font-size:33.5px;line-height:33.5px;color:#09090b;">4.2s</div>
<div class="t s" style="left:2352.5px;top:1420.6px;font-size:33.5px;line-height:33.5px;color:#09090b;">215</div>
<div class="r" style="left:752px;top:1480px;width:1700px;height:2px;background:#f1f1f3;"></div>
<div class="t s" style="left:760.0px;top:1515.9px;font-size:22.5px;line-height:22.5px;color:#71717a;width:53px;text-align:right;">9</div>
<div class="r" style="left:945px;top:1508px;width:36px;height:36px;background:#dbeafe;border:2px solid #93c5fd;border-radius:8px;box-sizing:border-box;"></div>
<svg class="r" style="left:945px;top:1508px;" width="36" height="36" viewBox="0 0 36 36" fill="none"><g transform="translate(6 6)"><path d="M4 14a1 1 0 0 1-.78-1.63l9.9-10.2a.5.5 0 0 1 .86.46l-1.920 6.02A1 1 0 0 0 13 10h7a1 1 0 0 1 .78 1.63l-9.9 10.2a.5.5 0 0 1-.86-.46l1.92-6.02A1 1 0 0 0 11 14z" stroke="#1d4ed8" stroke-width="2" stroke-linecap="round" stroke-linejoin="round"/></g></svg>
<div class="t s" style="left:997.5px;top:1509.9px;font-size:32px;line-height:32px;color:#09090b;">eval</div>
<div class="t m" style="left:1210.5px;top:1515.2px;font-size:28.4px;line-height:28.4px;color:#09090b;">{&quot;query&quot;:&quot;…</div>
<div class="t s" style="left:1473.5px;top:1508.6px;font-size:33.5px;line-height:33.5px;color:#09090b;">10s</div>
<div class="t s" style="left:1913.5px;top:1508.6px;font-size:33.5px;line-height:33.5px;color:#09090b;">19.8s</div>
<div class="t s" style="left:2352.5px;top:1508.6px;font-size:33.5px;line-height:33.5px;color:#09090b;">182</div>
<div class="r" style="left:752px;top:1568px;width:1700px;height:2px;background:#f1f1f3;"></div>
<div class="t s" style="left:760.0px;top:1603.9px;font-size:22.5px;line-height:22.5px;color:#71717a;width:53px;text-align:right;">10</div>
<div class="r" style="left:945px;top:1596px;width:36px;height:36px;background:#dbeafe;border:2px solid #93c5fd;border-radius:8px;box-sizing:border-box;"></div>
<svg class="r" style="left:945px;top:1596px;" width="36" height="36" viewBox="0 0 36 36" fill="none"><g transform="translate(6 6)"><path d="M4 14a1 1 0 0 1-.78-1.63l9.9-10.2a.5.5 0 0 1 .86.46l-1.920 6.02A1 1 0 0 0 13 10h7a1 1 0 0 1 .78 1.63l-9.9 10.2a.5.5 0 0 1-.86-.46l1.92-6.02A1 1 0 0 0 11 14z" stroke="#1d4ed8" stroke-width="2" stroke-linecap="round" stroke-linejoin="round"/></g></svg>
<div class="t s" style="left:997.5px;top:1597.9px;font-size:32px;line-height:32px;color:#09090b;">eval</div>
<div class="t m" style="left:1210.5px;top:1603.2px;font-size:28.4px;line-height:28.4px;color:#09090b;">{&quot;query&quot;:&quot;n…</div>
<div class="t s" style="left:1473.5px;top:1596.6px;font-size:33.5px;line-height:33.5px;color:#09090b;">3.6s</div>
<div class="t s" style="left:1913.5px;top:1596.6px;font-size:33.5px;line-height:33.5px;color:#09090b;">3.6s</div>
<div class="t s" style="left:2352.5px;top:1596.6px;font-size:33.5px;line-height:33.5px;color:#09090b;">56</div>
<div class="r" style="left:752px;top:1656px;width:1700px;height:2px;background:#f1f1f3;"></div>
</body></html>
